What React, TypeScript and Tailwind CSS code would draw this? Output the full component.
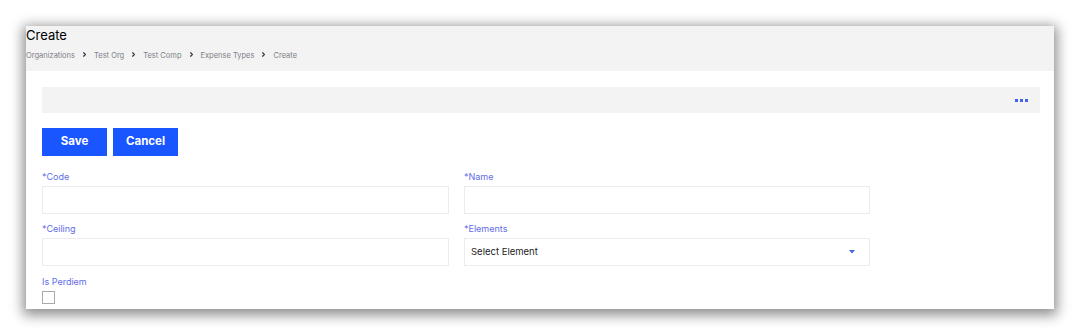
import { ChevronRight } from 'lucide-react'

const crumbs = ['Organizations', 'Test Org', 'Test Comp', 'Expense Types', 'Create']

function Field({ label, children }: { label: string; children?: React.ReactNode }) {
  return (
    <div className="flex flex-col">
      <label className="h-[14px] text-[9px] leading-[14px] text-[#5f6ee8]">{label}</label>
      <div className="mt-[2px] h-[28px] w-full border border-[#ececec] bg-white flex items-center px-[6px]">
        {children}
      </div>
    </div>
  )
}

export default function App() {
  return (
    <div className="w-[1079px] h-[334px] bg-white pt-[26px] pl-[26px]" style={{ fontFamily: 'Inter, "Noto Sans", sans-serif' }}>
      <div className="w-[1028px] h-[283px] bg-white shadow-[0_3px_12px_3px_rgba(0,0,0,0.45)] flex flex-col overflow-hidden">
        {/* page header */}
        <div className="h-[45px] shrink-0 bg-[#f3f3f3] pt-[1px]">
          <h1 className="text-[13px] leading-[16px] text-black">Create</h1>
          <nav className="mt-[7px] h-[12px] flex items-center gap-[6px] text-[7.5px] text-[#7b7f87]">
            {crumbs.map((c, i) => (
              <span key={c} className="flex items-center gap-[6px] leading-none">
                <span>{c}</span>
                {i < crumbs.length - 1 && <ChevronRight size={7} strokeWidth={4} className="text-[#333] block mb-[3px]" />}
              </span>
            ))}
          </nav>
        </div>

        <div className="px-[16px] pt-[16px]">
          {/* toolbar */}
          <div className="w-[998px] h-[26px] bg-[#f3f3f3] flex items-center justify-end pr-[12px]">
            <div className="flex gap-[2px]">
              <span className="w-[3px] h-[3px] bg-[#4565e8]" />
              <span className="w-[3px] h-[3px] bg-[#4565e8]" />
              <span className="w-[3px] h-[3px] bg-[#4565e8]" />
            </div>
          </div>

          <div className="mt-[15px] flex gap-[6px]">
            <button className="w-[65px] h-[28px] bg-[#1a56ff] text-white text-[11.5px] font-bold">Save</button>
            <button className="w-[65px] h-[28px] bg-[#1a56ff] text-white text-[11.5px] font-bold">Cancel</button>
          </div>

          <div className="mt-[14px] grid grid-cols-[407px_406px] gap-x-[15px] gap-y-[8px]">
            <Field label="*Code" />
            <Field label="*Name" />
            <Field label="*Ceiling" />
            <Field label="*Elements">
              <span className="flex-1 text-[9.5px] text-[#222]">Select Element</span>
              <svg width="6" height="4" viewBox="0 0 6 4" className="mr-[8px]">
                <path d="M0 0h6L3 3.5z" fill="#4565e8" />
              </svg>
            </Field>
          </div>

          <div className="mt-[9px] flex flex-col">
            <label className="h-[14px] text-[9px] leading-[14px] text-[#5f6ee8]">Is Perdiem</label>
            <span className="mt-[2px] w-[13px] h-[13px] border border-[#a9a9a9] bg-white" />
          </div>
        </div>
      </div>
    </div>
  )
}
